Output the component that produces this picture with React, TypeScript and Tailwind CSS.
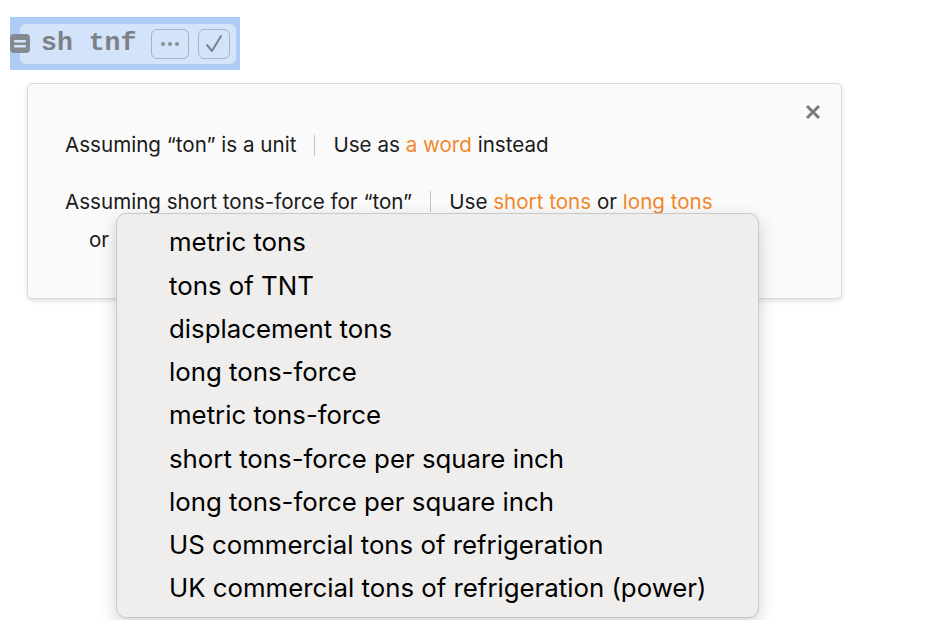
const menuItems = [
  "metric tons",
  "tons of TNT",
  "displacement tons",
  "long tons-force",
  "metric tons-force",
  "short tons-force per square inch",
  "long tons-force per square inch",
  "US commercial tons of refrigeration",
  "UK commercial tons of refrigeration (power)",
];

const Sep = () => <span className="mx-[18px] inline-block h-[21px] w-px bg-[#c4c4c4] align-middle" />;

export default function App() {
  return (
    <div className="relative h-[620px] w-[940px] overflow-hidden bg-white font-['Inter',sans-serif]">
      {/* input cell, selected */}
      <div className="relative ml-[10px] mt-[17px] flex h-[53px] w-[230px] items-center bg-[#aecdf6]">
        <div className="ml-[10px] flex h-[40px] w-[216px] items-center rounded-md bg-[#d3e3f9] pl-[21px] pr-[6px]">
          <span className="font-['Liberation_Mono',monospace] text-[26.5px] font-bold leading-none text-[#7d8086]">
            sh tnf
          </span>
          <div className="ml-auto flex items-center gap-[9px]">
            <div className="flex h-[30px] w-[38px] items-center justify-center gap-[3px] rounded-md border border-[#aab3bf]">
              <span className="h-[4px] w-[4px] rounded-full bg-[#8a9099]" />
              <span className="h-[4px] w-[4px] rounded-full bg-[#8a9099]" />
              <span className="h-[4px] w-[4px] rounded-full bg-[#8a9099]" />
            </div>
            <div className="flex h-[30px] w-[32px] items-center justify-center rounded-md border border-[#aab3bf]">
              <svg width="18" height="20" viewBox="0 0 18 20">
                <path d="M2 11 L7 17 L16 2" fill="none" stroke="#7c828b" strokeWidth="2" strokeLinecap="round" strokeLinejoin="round" />
              </svg>
            </div>
          </div>
        </div>
        <svg width="20" height="19" viewBox="0 0 20 19" className="absolute left-0 top-[17px]">
          <rect x="0" y="0" width="20" height="19" rx="4" fill="#858a91" />
          <rect x="4" y="6" width="12" height="2.5" rx="1" fill="#d3e3f9" />
          <rect x="4" y="11" width="12" height="2.5" rx="1" fill="#d3e3f9" />
        </svg>
      </div>

      {/* assumptions card */}
      <div className="relative ml-[27px] mt-[13px] h-[216px] w-[815px] rounded-[5px] border border-[#dadada] bg-[#fafafa] pl-[37px] pt-[47px] text-[20.6px] text-[#1b1b1b] shadow-[0_2px_5px_rgba(0,0,0,0.12)]">
        <button className="absolute right-[20px] top-[20px] text-[#7a7a7a]">
          <svg width="16" height="16" viewBox="0 0 16 16">
            <path d="M2 2 L14 14 M14 2 L2 14" stroke="#7a7a7a" strokeWidth="3" />
          </svg>
        </button>
        <div className="flex h-[28px] items-center">
          <span>Assuming “ton” is a unit</span>
          <Sep />
          <span>
            Use as <span className="text-[#f2882a]">a word</span> instead
          </span>
        </div>
        <div className="mt-[28px] leading-[39px]">
          <div className="flex h-[28px] items-center">
            <span>Assuming short tons-force for “ton”</span>
            <Sep />
            <span>
              Use <span className="text-[#f2882a]">short tons</span> or{" "}
              <span className="text-[#f2882a]">long tons</span>
            </span>
          </div>
          <div className="mt-[5px] pl-[24px]">or</div>
        </div>
      </div>

      {/* popup menu */}
      <div className="absolute left-[116px] top-[213px] w-[643px] rounded-[10px] border border-[#c9c8c6] bg-[#efeeec] pb-[7px] pt-[7px] shadow-[0_6px_18px_rgba(0,0,0,0.18)]">
        {menuItems.map((item) => (
          <div key={item} className="flex h-[43.25px] items-center pl-[52px] text-[25.8px] text-black">
            {item}
          </div>
        ))}
      </div>
    </div>
  );
}
